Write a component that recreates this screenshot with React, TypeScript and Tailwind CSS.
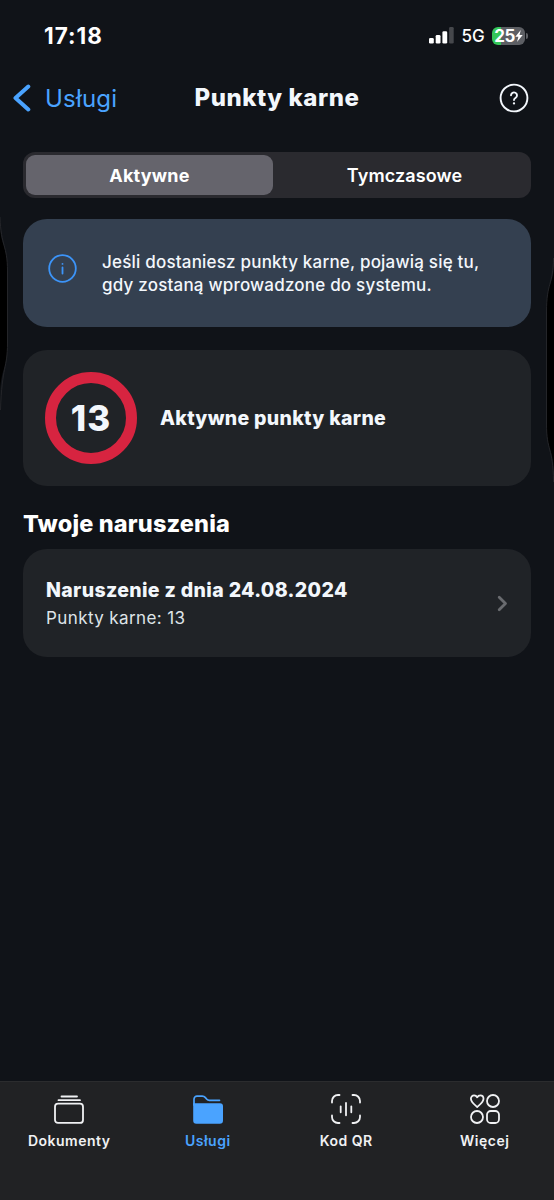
import type { ReactNode } from 'react'

interface TabItem {
  label: string
  icon: ReactNode
  active?: boolean
}

function DocumentsIcon() {
  return (
    <svg width="32" height="32" viewBox="0 0 32 32" fill="none" stroke="currentColor" strokeWidth="1.8" strokeLinecap="round">
      <path d="M8.5 3.5H24M5.5 7.2H27" />
      <rect x="2" y="10.7" width="28" height="19.2" rx="3" />
    </svg>
  )
}

function FolderIcon() {
  return (
    <svg width="32" height="32" viewBox="0 0 32 32" fill="none">
      <path
        d="M2 12V6.2A3 3 0 0 1 5 3.2h5.2c1.5 0 2.4.5 3.2 1.4l1.4 1.6c.7.8 1.4 1.1 2.5 1.1h10.2"
        stroke="currentColor"
        strokeWidth="1.7"
        strokeLinecap="round"
      />
      <path d="M1.2 10.2H28a3 3 0 0 1 3 3v14.3a3.2 3.2 0 0 1-3.2 3.2H4.4a3.2 3.2 0 0 1-3.2-3.2z" fill="currentColor" />
    </svg>
  )
}

function ScanIcon() {
  return (
    <svg width="32" height="32" viewBox="0 0 32 32" fill="none" stroke="currentColor" strokeWidth="1.8" strokeLinecap="round">
      <path d="M2 9.5V8a6 6 0 0 1 6-6h1.5M22.5 2H24a6 6 0 0 1 6 6v1.5M30 22.5V24a6 6 0 0 1-6 6h-1.5M9.5 30H8a6 6 0 0 1-6-6v-1.5" />
      <path d="M10.7 13.3v6M16 10v12.3M21.3 13.3v6" />
    </svg>
  )
}

function MoreIcon() {
  return (
    <svg width="32" height="32" viewBox="0 0 32 32" fill="none" stroke="currentColor" strokeWidth="1.8" strokeLinejoin="round">
      <path d="M8.2 14C5.2 11.4 1.9 9 1.9 5.8c0-2 1.4-3.5 3.2-3.5 1.4 0 2.5.8 3.1 2 .6-1.2 1.7-2 3.1-2 1.8 0 3.2 1.5 3.2 3.5 0 3.2-3.3 5.6-6.3 8.2z" />
      <circle cx="24" cy="8" r="6" />
      <circle cx="8" cy="24" r="6" />
      <rect x="18" y="18" width="12" height="12" rx="3.8" />
    </svg>
  )
}

const tabs: TabItem[] = [
  { label: 'Dokumenty', icon: <DocumentsIcon /> },
  { label: 'Usługi', icon: <FolderIcon />, active: true },
  { label: 'Kod QR', icon: <ScanIcon /> },
  { label: 'Więcej', icon: <MoreIcon /> },
]

function StatusBar() {
  return (
    <div className="flex h-[72px] items-center justify-between pl-[44px] pr-[26px]">
      <span className="text-[22.5px] font-bold tracking-[1px] text-white">17:18</span>
      <div className="flex items-center">
        <svg className="mb-[2px]" width="25" height="17" viewBox="0 0 25 17" fill="#fff">
          <rect x="0" y="11" width="4.8" height="5.5" rx="1.3" />
          <rect x="6.7" y="8" width="4.8" height="8.5" rx="1.3" />
          <rect x="13.4" y="4.3" width="4.8" height="12.2" rx="1.3" />
          <rect x="20.1" y="0" width="4.6" height="16.5" rx="1.3" fill="#46484c" />
        </svg>
        <span className="ml-[7px] text-[17px] font-medium leading-5 tracking-[0.2px] text-white">5G</span>
        <div className="ml-[7px] flex h-[18px] w-[33px] items-center justify-center rounded-[6px] bg-linear-to-r from-[#34c759] from-27% to-[#5d5f64] to-27%">
          <span className="text-[17px] font-bold leading-none tracking-[-0.6px] text-white">25</span>
          <svg width="8" height="12" viewBox="0 0 8 12" fill="#fff">
            <path d="M5.8 0L.3 6.8h3.1L2 12l5.7-7.1H4.5z" />
          </svg>
        </div>
        <span className="ml-px h-[6px] w-[2px] rounded-r-full bg-[#5d5f64]" />
      </div>
    </div>
  )
}

function NavBar() {
  return (
    <header className="grid h-[52px] grid-cols-[1fr_auto_1fr] items-center px-[13px]">
      <button className="flex items-center text-[#4aa3ff]">
        <svg width="18" height="28" viewBox="0 0 18 28" fill="none" stroke="currentColor" strokeWidth="4" strokeLinecap="round" strokeLinejoin="round">
          <path d="M15.3 2.5L2.5 14l12.8 11.500" />
        </svg>
        <span className="ml-[14px] mt-px text-[24px] tracking-[0.2px]">Usługi</span>
      </button>
      <h1 className="text-[24px] font-extrabold tracking-[0.55px] text-[#f3f7fc]">Punkty karne</h1>
      <button className="flex justify-end pr-3">
        <svg width="30" height="30" viewBox="0 0 30 30" fill="none" stroke="#f3f7fc" strokeWidth="1.9" strokeLinecap="round" strokeLinejoin="round">
          <circle cx="15" cy="15" r="13.4" />
          <path d="M12 12.3a3 2.9 0 1 1 4.7 2.4c-1 .7-1.7 1.2-1.7 2.3" />
          <path d="M15 20.3v.1" strokeWidth="2.3" />
        </svg>
      </button>
    </header>
  )
}

function SegmentedControl() {
  return (
    <div className="mt-[28px] grid h-[46px] grid-cols-[247px_1fr] gap-[2px] rounded-[12px] bg-[#2a2a2f] p-[3px]">
      <button className="rounded-[9px] bg-[#65646c] text-[18px] font-bold tracking-[0.2px] text-white">Aktywne</button>
      <button className="pl-[6px] text-[18px] font-semibold tracking-[0.1px] text-white">Tymczasowe</button>
    </div>
  )
}

// Pressed side button outlines on both screen edges
function EdgeBulges() {
  return (
    <>
      <svg className="absolute left-0 top-[205px]" width="10" height="220" viewBox="0 0 10 220" fill="none">
        <path d="M0 22C1 42 7.5 40 7.5 66v72C7.5 164 2 160 0 186z" fill="#000" />
        <path d="M0 12C1 42 7.5 40 7.5 66v72C7.5 164 2 160 .5 205" stroke="#242529" />
      </svg>
      <svg className="absolute right-0 top-[250px]" width="10" height="240" viewBox="0 0 10 240" fill="none">
        <path d="M10 16C9 36 2.5 32 2.5 62v112C2.5 202 9 196 10 222z" fill="#000" />
        <path d="M9.5 8C9 36 2.5 32 2.5 62v112C2.5 202 9 196 9.5 232" stroke="#242529" />
      </svg>
    </>
  )
}

export default function App() {
  return (
    <div className="relative flex h-[1200px] w-[554px] flex-col overflow-hidden bg-[#101318] font-['Inter',sans-serif] text-[#f3f7fc]">
      <StatusBar />
      <NavBar />
      <EdgeBulges />

      <main className="flex-1 px-[23px]">
        <SegmentedControl />

        <section className="mt-[21px] flex h-[108px] rounded-[24px] bg-[#344050] pl-[25px]">
          <svg className="mt-[35px] shrink-0" width="29" height="29" viewBox="0 0 29 29" fill="none" stroke="#3c94f8" strokeWidth="1.8" strokeLinecap="round">
            <circle cx="14.5" cy="14.5" r="13.3" />
            <path d="M14.5 13.5v6.1M14.5 9.8v.1" />
          </svg>
          <p className="ml-[25px] mt-[32px] text-[17px] font-medium leading-[23px] tracking-[0.2px]">
            Jeśli dostaniesz punkty karne, pojawią się tu,
            <br />
            gdy zostaną wprowadzone do systemu.
          </p>
        </section>

        <section className="mt-[23px] flex h-[136px] items-center rounded-[24px] bg-[#202327] pl-[22px]">
          <div className="flex size-[92px] items-center justify-center rounded-full border-[11px] border-[#d72440] text-[35px] font-extrabold tracking-[1px]">
            13
          </div>
          <span className="ml-[23px] mt-[2px] text-[19.5px] font-extrabold tracking-[0.3px]">Aktywne punkty karne</span>
        </section>

        <h2 className="mt-[20px] h-[43px] text-[23.5px] font-extrabold leading-[36px] tracking-[0.15px] text-white">Twoje naruszenia</h2>

        <section className="flex h-[108px] items-center justify-between rounded-[24px] bg-[#202327] pl-[23px] pr-[23px]">
          <div className="pt-px">
            <p className="text-[19.5px] font-extrabold leading-[28px] tracking-[0.35px]">Naruszenie z dnia 24.08.2024</p>
            <p className="text-[17px] leading-[28px] tracking-[0.4px] text-[#dfe3e8]">Punkty karne: 13</p>
          </div>
          <svg width="11" height="17" viewBox="0 0 11 17" fill="none" stroke="#696b6f" strokeWidth="2.8" strokeLinecap="round" strokeLinejoin="round">
            <path d="M2.2 2.2l6.3 6.3-6.3 6.3" />
          </svg>
        </section>
      </main>

      <nav className="grid h-[119px] grid-cols-4 border-t border-[#2b2c2e] bg-[#212224]">
        {tabs.map(tab => (
          <button
            key={tab.label}
            className={`flex flex-col items-center pt-[11px] ${tab.active ? 'text-[#4aa3ff]' : 'text-[#f0f1f3]'}`}
          >
            {tab.icon}
            <span className="mt-[6px] text-[14px] font-semibold leading-[20px] tracking-[0.5px]">{tab.label}</span>
          </button>
        ))}
      </nav>
    </div>
  )
}
